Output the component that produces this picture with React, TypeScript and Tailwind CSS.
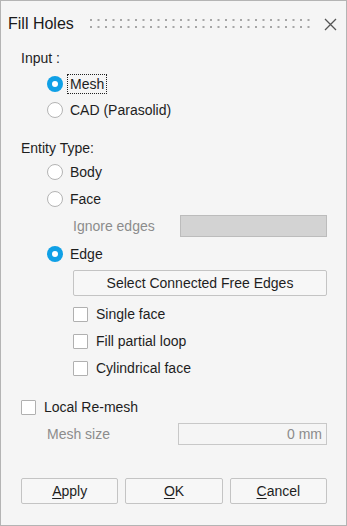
import React from 'react';

const FONT = "font-['Liberation_Sans',Arial,sans-serif]";

function Radio({ label, checked, focused }: { label: string; checked?: boolean; focused?: boolean }) {
  return (
    <div className="flex items-center h-[26px] pl-[26px]">
      {checked ? (
        <span className="w-[16px] h-[16px] rounded-full bg-[#0fa0e6] flex items-center justify-center">
          <span className="w-[6px] h-[6px] rounded-full bg-white" />
        </span>
      ) : (
        <span className="w-[16px] h-[16px] rounded-full bg-white border border-[#b4b4b4]" />
      )}
      <span
        className={
          focused
            ? 'ml-[4px] px-[2px] py-[1px] border border-dotted border-[#222] leading-[16px]'
            : 'ml-[7px] leading-[16px]'
        }
      >
        {label}
      </span>
    </div>
  );
}

function Check({ label, className }: { label: string; className?: string }) {
  return (
    <div className={`flex items-center h-[27px] ${className ?? ''}`}>
      <span className="w-[15px] h-[15px] bg-white border border-[#b0b0b0] rounded-[1px]" />
      <span className="ml-[8px]">{label}</span>
    </div>
  );
}

function TitleDots() {
  const dots = Array.from({ length: 30 }, (_, i) => i);
  return (
    <svg width="222" height="10" viewBox="0 0 222 10" className="block">
      {dots.map((i) => (
        <g key={i} fill="#a6a6a6">
          <rect x={i * 7.5} y={0} width={2} height={2} />
          <rect x={i * 7.5} y={7} width={2} height={2} />
        </g>
      ))}
    </svg>
  );
}

export default function App() {
  return (
    <div
      className={`w-[347px] h-[526px] border border-[#b4b4b4] bg-[#f5f5f5] flex flex-col text-[14px] text-[#1e1e1e] ${FONT}`}
    >
      {/* Title bar */}
      <div className="h-[45px] flex items-center pl-[7px]">
        <span className="text-[16px] text-[#1a1a1a] w-[82px]">Fill Holes</span>
        <TitleDots />
        <svg width="13" height="13" viewBox="0 0 13 13" className="ml-[12px] mt-[1px]">
          <path d="M1 1 L12 12 M12 1 L1 12" stroke="#555" strokeWidth="1.3" fill="none" />
        </svg>
      </div>

      <div className="flex flex-col pl-[20px] pr-[19px]">
        {/* Input */}
        <div className="h-[20px] mt-[2px] flex items-center">Input :</div>
        <div className="mt-[3px] flex flex-col">
          <Radio label="Mesh" checked focused />
          <Radio label="CAD (Parasolid)" />
        </div>

        {/* Entity type */}
        <div className="h-[20px] mt-[15px] flex items-center">Entity Type:</div>
        <div className="mt-[1px] flex flex-col">
          <div className="flex flex-col gap-[1px]">
            <Radio label="Body" />
            <Radio label="Face" />
          </div>
          <div className="flex items-center h-[22px] mt-[3px] pl-[52px]">
            <span className="text-[#8c8c8c] w-[107px]">Ignore edges</span>
            <div className="flex-1 h-[22px] bg-[#d3d3d3] border border-[#bcbcbc]" />
          </div>
          <div className="mt-[4px]">
            <Radio label="Edge" checked />
          </div>
          <div className="ml-[52px] mt-[3px] h-[26px] border border-[#c4c4c4] rounded-[2px] bg-[#f7f7f7] flex items-center justify-center">
            Select Connected Free Edges
          </div>
          <div className="mt-[5px] flex flex-col pl-[52px]">
            <Check label="Single face" />
            <Check label="Fill partial loop" />
            <Check label="Cylindrical face" />
          </div>
        </div>

        {/* Local re-mesh */}
        <Check label="Local Re-mesh" className="mt-[12px]" />
        <div className="flex items-center h-[22px] mt-[2px] pl-[26px]">
          <span className="text-[#8c8c8c] w-[131px]">Mesh size</span>
          <div className="flex-1 h-[22px] border border-[#c8c8c8] bg-[#f5f5f5] flex items-center justify-end pr-[4px] text-[#8c8c8c]">
            0 mm
          </div>
        </div>

        {/* Footer buttons */}
        <div className="grid grid-cols-3 gap-[7px] mt-[33px]">
          <button className="h-[26px] border border-[#c4c4c4] rounded-[2px] bg-[#f7f7f7]">
            <span className="underline underline-offset-2">A</span>pply
          </button>
          <button className="h-[26px] border border-[#c4c4c4] rounded-[2px] bg-[#f7f7f7]">
            <span className="underline underline-offset-2">O</span>K
          </button>
          <button className="h-[26px] border border-[#c4c4c4] rounded-[2px] bg-[#f7f7f7]">
            <span className="underline underline-offset-2">C</span>ancel
          </button>
        </div>
      </div>
    </div>
  );
}
